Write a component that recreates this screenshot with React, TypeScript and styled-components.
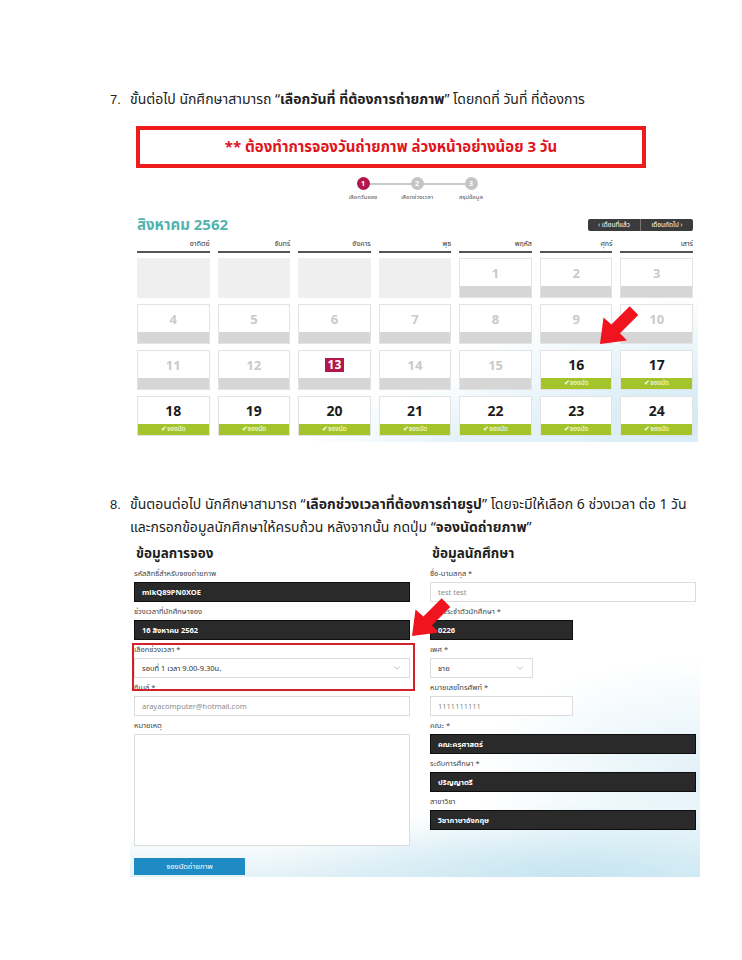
import React from "react";
import styled, { createGlobalStyle } from "styled-components";
import { ChevronDown } from "lucide-react";

const GlobalStyle = createGlobalStyle`
  html, body { margin: 0; padding: 0; background: #ffffff; }
  body { font-family: "Liberation Sans", "Noto Sans Thai", "Noto Sans", sans-serif; color: #222; }
  * { box-sizing: border-box; }
`;

const THAI = `"Noto Sans Thai", "Liberation Sans", "Noto Sans", sans-serif`;
const DIGITS = `"Open Sans", "Noto Sans", sans-serif`;

const Page = styled.div`
  width: 742px;
  min-height: 960px;
  padding-top: 88px;
  background: #fff;
`;

const Step = styled.div<{ $top?: number }>`
  display: flex;
  padding-left: 110px;
  margin-top: ${(p) => p.$top ?? 0}px;
  font-size: 14px;
  line-height: 23px;
  color: #222;
`;

const StepNum = styled.span`
  width: 20px;
  flex: none;
  font-family: "Liberation Sans", sans-serif;
  font-size: 13px;
`;

const StepText = styled.div`
  font-family: ${THAI};
  b { font-weight: 700; }
`;

/* ---------- calendar screenshot ---------- */

const CalShot = styled.div`
  position: relative;
  margin: 15px 0 0 134px;
  width: 564px;
  padding-bottom: 6px;
  background:
    radial-gradient(ellipse 42% 38% at 96% 92%, rgba(205, 232, 244, 0.95), rgba(255, 255, 255, 0) 100%),
    radial-gradient(ellipse 30% 20% at 60% 100%, rgba(220, 238, 246, 0.8), rgba(255, 255, 255, 0) 100%);
`;

const Banner = styled.div`
  margin-left: 2px;
  width: 510px;
  height: 42px;
  border: 4px solid #ee1c1c;
  display: flex;
  align-items: center;
  justify-content: center;
  color: #e0141c;
  font-family: ${THAI};
  font-weight: 700;
  font-size: 15px;
  background: #fff;
`;

const Stepper = styled.div`
  display: flex;
  justify-content: center;
  padding-top: 3px;
  margin-top: 6px;
  margin-left: 2px;
`;

const StepItem = styled.div`
  position: relative;
  width: 54px;
  display: flex;
  flex-direction: column;
  align-items: center;
  gap: 4px;
`;

const StepLine = styled.div`
  position: absolute;
  top: 6px;
  left: 33px;
  width: 42px;
  height: 2px;
  background: #c9c9c9;
`;

const StepDot = styled.div<{ $active?: boolean }>`
  position: relative;
  z-index: 1;
  width: 13px;
  height: 13px;
  border-radius: 50%;
  background: ${(p) => (p.$active ? "#b3164c" : "#c4c4c4")};
  color: #fff;
  font-family: ${DIGITS};
  font-weight: 700;
  font-size: 7px;
  line-height: 13px;
  text-align: center;
`;

const StepLabel = styled.div`
  font-family: ${THAI};
  font-size: 6px;
  line-height: 8px;
  color: #555;
  white-space: nowrap;
`;

const MonthRow = styled.div`
  display: flex;
  justify-content: space-between;
  align-items: center;
  margin: 16px 5px 0 3px;
  height: 14px;
`;

const MonthTitle = styled.div`
  font-family: ${THAI};
  font-weight: 700;
  font-size: 15px;
  color: #52b3b0;
`;

const NavGroup = styled.div`
  display: flex;
  height: 12px;
  border-radius: 2px;
  overflow: hidden;
  background: #3b3b3b;
`;

const NavBtn = styled.div<{ $w: number }>`
  width: ${(p) => p.$w}px;
  display: flex;
  align-items: center;
  justify-content: center;
  color: #fff;
  font-family: ${THAI};
  font-size: 6.5px;
  & + & { border-left: 1px solid #777; }
`;

const DayHeaders = styled.div`
  display: grid;
  grid-template-columns: repeat(7, 1fr);
  column-gap: 8px;
  margin: 6px 5px 0 3px;
`;

const DayHead = styled.div`
  text-align: right;
  font-family: ${THAI};
  font-size: 7px;
  line-height: 12px;
  color: #333;
  border-bottom: 2px solid #555;
  padding-bottom: 1px;
`;

const Grid = styled.div`
  display: grid;
  grid-template-columns: repeat(7, 1fr);
  grid-auto-rows: 40px;
  column-gap: 8px;
  row-gap: 6px;
  margin: 5px 5px 0 3px;
`;

type Kind = "empty" | "off" | "today" | "open";

const Cell = styled.div<{ $kind: Kind }>`
  display: flex;
  flex-direction: column;
  background: ${(p) => (p.$kind === "empty" ? "#efefef" : "#ffffff")};
  border: 1px solid ${(p) => (p.$kind === "empty" ? "#efefef" : "#e3e3e3")};
`;

const CellNum = styled.div<{ $kind: Kind }>`
  flex: 1;
  display: flex;
  align-items: center;
  justify-content: center;
  font-family: ${DIGITS};
  font-weight: 700;
  font-size: ${(p) => (p.$kind === "open" ? 14 : 13)}px;
  color: ${(p) => (p.$kind === "open" ? "#1c1c1c" : "#cacaca")};
`;

const TodayBadge = styled.span`
  display: inline-block;
  background: #b3164c;
  color: #fff;
  font-size: 12px;
  line-height: 14px;
  padding: 0 3px;
`;

const CellBar = styled.div<{ $open?: boolean }>`
  height: 11px;
  flex: none;
  background: ${(p) => (p.$open ? "#a3c42a" : "#d6d6d6")};
  color: #fff;
  font-family: ${THAI};
  font-size: 6.5px;
  line-height: 11px;
  text-align: center;
`;

const Arrow = styled.svg<{ $x: number; $y: number }>`
  position: absolute;
  left: ${(p) => p.$x}px;
  top: ${(p) => p.$y}px;
  width: 46px;
  height: 42px;
  overflow: visible;
`;

/* ---------- form screenshot ---------- */

const FormShot = styled.div`
  position: relative;
  margin: 0 0 0 130px;
  width: 570px;
  height: 338px;
  padding: 5px 0 0 4px;
  background:
    radial-gradient(ellipse 55% 22% at 78% 100%, rgba(196, 228, 240, 0.95), rgba(255, 255, 255, 0) 100%),
    radial-gradient(ellipse 40% 35% at 100% 70%, rgba(222, 240, 247, 0.9), rgba(255, 255, 255, 0) 100%),
    linear-gradient(to bottom, rgba(255, 255, 255, 0) 86%, rgba(222, 239, 246, 0.8) 100%);
`;

const Columns = styled.div`
  display: grid;
  grid-template-columns: 276px 266px;
  column-gap: 20px;
`;

const Column = styled.div`
  display: flex;
  flex-direction: column;
`;

const SectionTitle = styled.div`
  font-family: ${THAI};
  font-weight: 700;
  font-size: 13.5px;
  line-height: 20px;
  color: #1e1e1e;
  padding-left: 2px;
  margin-bottom: 5px;
`;

const Field = styled.div`
  display: flex;
  flex-direction: column;
  gap: 3px;
  margin-bottom: 5px;
`;

const Label = styled.div`
  font-family: ${THAI};
  font-size: 7.5px;
  line-height: 10px;
  color: #444;
  white-space: nowrap;
`;

const Input = styled.div<{ $dark?: boolean; $w?: number; $h?: number }>`
  width: ${(p) => (p.$w ? `${p.$w}px` : "100%")};
  height: ${(p) => p.$h ?? 20}px;
  display: flex;
  align-items: ${(p) => (p.$h ? "flex-start" : "center")};
  justify-content: space-between;
  padding: 0 7px;
  background: ${(p) => (p.$dark ? "#2a2a2a" : "#ffffff")};
  border: 1px solid ${(p) => (p.$dark ? "#0e0e0e" : "#dcdcdc")};
  color: ${(p) => (p.$dark ? "#ffffff" : "#8c8c8c")};
  font-family: ${THAI};
  font-weight: ${(p) => (p.$dark ? 700 : 400)};
  font-size: 7.5px;
`;

const SelectValue = styled.span`
  color: #333;
`;

const SubmitBtn = styled.div`
  margin-top: 7px;
  width: 111px;
  height: 17px;
  background: #1f8bc4;
  color: #fff;
  font-family: ${THAI};
  font-size: 7.5px;
  display: flex;
  align-items: center;
  justify-content: center;
`;

const Highlight = styled.div`
  position: absolute;
  left: 2px;
  top: 104px;
  width: 283px;
  height: 48px;
  border: 2px solid #d4202a;
  pointer-events: none;
`;

/* ---------- data ---------- */

const days = ["อาทิตย์", "จันทร์", "อังคาร", "พุธ", "พฤหัส", "ศุกร์", "เสาร์"];

type Day = { n?: number; kind: Kind };
const cells: Day[] = [
  { kind: "empty" }, { kind: "empty" }, { kind: "empty" }, { kind: "empty" },
  { n: 1, kind: "off" }, { n: 2, kind: "off" }, { n: 3, kind: "off" },
  { n: 4, kind: "off" }, { n: 5, kind: "off" }, { n: 6, kind: "off" }, { n: 7, kind: "off" },
  { n: 8, kind: "off" }, { n: 9, kind: "off" }, { n: 10, kind: "off" },
  { n: 11, kind: "off" }, { n: 12, kind: "off" }, { n: 13, kind: "today" }, { n: 14, kind: "off" },
  { n: 15, kind: "off" }, { n: 16, kind: "open" }, { n: 17, kind: "open" },
  { n: 18, kind: "open" }, { n: 19, kind: "open" }, { n: 20, kind: "open" }, { n: 21, kind: "open" },
  { n: 22, kind: "open" }, { n: 23, kind: "open" }, { n: 24, kind: "open" },
];

const RedArrow: React.FC<{ x: number; y: number }> = ({ x, y }) => (
  <Arrow $x={x} $y={y} viewBox="0 0 46 42">
    <polygon
      points="5,39 8.5,12.5 16.4,19.6 34.7,1.3 43.3,9.9 25,28.2 32,35.6"
      fill="#f0141e"
    />
  </Arrow>
);

export default function App() {
  return (
    <Page>
      <GlobalStyle />
      <Step>
        <StepNum>7.</StepNum>
        <StepText>
          ขั้นต่อไป นักศึกษาสามารถ “<b>เลือกวันที่ ที่ต้องการถ่ายภาพ</b>” โดยกดที่ วันที่ ที่ต้องการ
        </StepText>
      </Step>

      <CalShot>
        <Banner>** ต้องทำการจองวันถ่ายภาพ ล่วงหน้าอย่างน้อย 3 วัน</Banner>
        <Stepper>
          <StepItem>
            <StepLine />
            <StepDot $active>1</StepDot>
            <StepLabel>เลือกวันจอง</StepLabel>
          </StepItem>
          <StepItem>
            <StepLine />
            <StepDot>2</StepDot>
            <StepLabel>เลือกช่วงเวลา</StepLabel>
          </StepItem>
          <StepItem>
            <StepDot>3</StepDot>
            <StepLabel>สรุปข้อมูล</StepLabel>
          </StepItem>
        </Stepper>
        <MonthRow>
          <MonthTitle>สิงหาคม 2562</MonthTitle>
          <NavGroup>
            <NavBtn $w={52}>‹ เดือนที่แล้ว</NavBtn>
            <NavBtn $w={53}>เดือนถัดไป ›</NavBtn>
          </NavGroup>
        </MonthRow>
        <DayHeaders>
          {days.map((d) => (
            <DayHead key={d}>{d}</DayHead>
          ))}
        </DayHeaders>
        <Grid>
          {cells.map((c, i) => (
            <Cell key={i} $kind={c.kind}>
              {c.kind !== "empty" && (
                <>
                  <CellNum $kind={c.kind}>
                    {c.kind === "today" ? <TodayBadge>{c.n}</TodayBadge> : c.n}
                  </CellNum>
                  <CellBar $open={c.kind === "open"}>
                    {c.kind === "open" ? "✔จองนัด" : ""}
                  </CellBar>
                </>
              )}
            </Cell>
          ))}
        </Grid>
        <RedArrow x={461} y={179} />
      </CalShot>

      <Step $top={51}>
        <StepNum>8.</StepNum>
        <StepText>
          ขั้นตอนต่อไป นักศึกษาสามารถ “<b>เลือกช่วงเวลาที่ต้องการถ่ายรูป</b>” โดยจะมีให้เลือก 6 ช่วงเวลา ต่อ 1 วัน
          <br />
          และกรอกข้อมูลนักศึกษาให้ครบถ้วน หลังจากนั้น กดปุ่ม “<b>จองนัดถ่ายภาพ</b>”
        </StepText>
      </Step>

      <FormShot>
        <Columns>
          <Column>
            <SectionTitle>ข้อมูลการจอง</SectionTitle>
            <Field>
              <Label>รหัสสิทธิ์สำหรับจองถ่ายภาพ</Label>
              <Input $dark>mlkQ89PN0XOE</Input>
            </Field>
            <Field>
              <Label>ช่วงเวลาที่นักศึกษาจอง</Label>
              <Input $dark>16 สิงหาคม 2562</Input>
            </Field>
            <Field>
              <Label>เลือกช่วงเวลา *</Label>
              <Input>
                <SelectValue>รอบที่ 1 เวลา 9.00-9.30น.</SelectValue>
                <ChevronDown size={10} color="#9a9a9a" strokeWidth={1.5} />
              </Input>
            </Field>
            <Field>
              <Label>อีเมล์ *</Label>
              <Input>arayacomputer@hotmail.com</Input>
            </Field>
            <Field>
              <Label>หมายเหตุ</Label>
              <Input $h={112} />
            </Field>
            <SubmitBtn>จองนัดถ่ายภาพ</SubmitBtn>
          </Column>

          <Column>
            <SectionTitle>ข้อมูลนักศึกษา</SectionTitle>
            <Field>
              <Label>ชื่อ-นามสกุล *</Label>
              <Input>test test</Input>
            </Field>
            <Field>
              <Label>รหัสประจำตัวนักศึกษา *</Label>
              <Input $dark $w={143}>0226</Input>
            </Field>
            <Field>
              <Label>เพศ *</Label>
              <Input $w={103}>
                <SelectValue>ชาย</SelectValue>
                <ChevronDown size={10} color="#9a9a9a" strokeWidth={1.5} />
              </Input>
            </Field>
            <Field>
              <Label>หมายเลขโทรศัพท์ *</Label>
              <Input $w={143}>1111111111</Input>
            </Field>
            <Field>
              <Label>คณะ *</Label>
              <Input $dark>คณะครุศาสตร์</Input>
            </Field>
            <Field>
              <Label>ระดับการศึกษา *</Label>
              <Input $dark>ปริญญาตรี</Input>
            </Field>
            <Field>
              <Label>สาขาวิชา</Label>
              <Input $dark>วิชาภาษาอังกฤษ</Input>
            </Field>
          </Column>
        </Columns>
        <Highlight />
        <RedArrow x={277} y={58} />
      </FormShot>
    </Page>
  );
}
